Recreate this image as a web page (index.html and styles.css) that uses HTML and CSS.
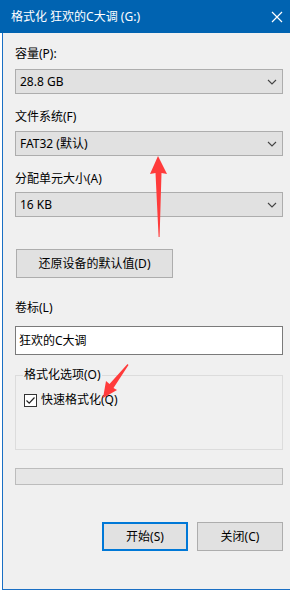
FILE: index.html
```html
<!DOCTYPE html>
<html lang="zh-CN">
<head>
    <meta charset="UTF-8">
    <meta name="viewport" content="width=device-width, initial-scale=1.0">
    <title>格式化 狂欢的C大调 (G:)</title>
    <link rel="stylesheet" href="styles.css">
</head>
<body>
    <div class="window">
        <div class="titlebar">
            <span class="title">格式化 狂欢的C大调 (G:)</span>
            <svg class="close-icon" width="12" height="12" viewBox="0 0 12 12">
                <path d="M1 1 L11 11 M11 1 L1 11" stroke="#fff" stroke-width="1.2" fill="none"/>
            </svg>
        </div>

        <div class="frame">
            <div class="dialog">
                <div class="label label-first">容量(P):</div>
                <div class="combo">
                    <span>28.8 GB</span>
                    <svg class="chevron" width="10" height="6" viewBox="0 0 10 6"><path d="M1 1 L5 5 L9 1" stroke="#444" stroke-width="1.1" fill="none"/></svg>
                </div>

                <div class="label">文件系统(F)</div>
                <div class="combo">
                    <span>FAT32 (默认)</span>
                    <svg class="chevron" width="10" height="6" viewBox="0 0 10 6"><path d="M1 1 L5 5 L9 1" stroke="#444" stroke-width="1.1" fill="none"/></svg>
                </div>

                <div class="label label-tight">分配单元大小(A)</div>
                <div class="combo">
                    <span>16 KB</span>
                    <svg class="chevron" width="10" height="6" viewBox="0 0 10 6"><path d="M1 1 L5 5 L9 1" stroke="#444" stroke-width="1.1" fill="none"/></svg>
                </div>

                <button class="btn btn-reset">还原设备的默认值(D)</button>

                <div class="label label-volume">卷标(L)</div>
                <div class="textbox">狂欢的C大调</div>

                <fieldset class="group">
                    <legend>格式化选项(O)</legend>
                    <label class="check">
                        <span class="checkbox">
                            <svg width="11" height="11" viewBox="0 0 11 11"><path d="M1.5 5.5 L4.2 8.2 L9.5 2.5" stroke="#222" stroke-width="1.2" fill="none"/></svg>
                        </span>
                        快速格式化(Q)
                    </label>
                </fieldset>

                <div class="progress"></div>

                <div class="actions">
                    <button class="btn btn-default">开始(S)</button>
                    <button class="btn">关闭(C)</button>
                </div>
            </div>
        </div>

        <svg class="arrows" width="290" height="591" viewBox="0 0 290 591">
            <polygon points="158,156 167,174 161.5,173 159.6,237 158.6,237 155.5,173 150,174" fill="#ff3b3b"/>
            <polygon points="103,398 106,381 109.5,384 127.5,364 128.5,365 113.5,388 117,390" fill="#ff3b3b"/>
        </svg>
    </div>
</body>
</html>
```

FILE: styles.css
```css
* {
    box-sizing: border-box;
}

body {
    margin: 0;
    background-color: #fff;
    font-family: "Noto Sans", "Noto Sans CJK SC", sans-serif;
    font-size: 12px;
    color: #000;
}

.window {
    position: relative;
    width: 290px;
    height: 591px;
    display: flex;
    flex-direction: column;
}

.titlebar {
    height: 33px;
    background-color: #0063b1;
    color: #fff;
    display: flex;
    align-items: center;
    justify-content: space-between;
    padding: 0 6px 0 11px;
}

.title {
    font-size: 12px;
    line-height: 16px;
}

.close-icon {
    margin-right: 1px;
}

.frame {
    height: 557px;
    padding-left: 2px;
}

.dialog {
    height: 100%;
    background-color: #f0f0f0;
    border-left: 1px solid #1a6fc4;
    border-bottom: 1px solid #1a6fc4;
    padding: 0 7px 0 12px;
    display: flex;
    flex-direction: column;
}

.label {
    line-height: 16px;
    margin: 15px 0 6px;
}

.label-first {
    margin-top: 13px;
    margin-bottom: 7px;
}

.label-tight {
    margin-bottom: 5px;
}

.label-volume {
    margin: 22px 0 10px;
}

.combo {
    height: 25px;
    background-color: #e1e1e1;
    border: 1px solid #adadad;
    display: flex;
    align-items: center;
    justify-content: space-between;
    padding: 0 5px 0 4px;
    line-height: 16px;
}

.chevron {
    display: block;
}

.btn {
    font-family: inherit;
    font-size: 12px;
    color: #000;
    background-color: #e1e1e1;
    border: 1px solid #adadad;
    height: 29px;
    width: 86px;
    padding: 0;
    line-height: 16px;
}

.btn-reset {
    width: 157px;
    margin: 32px 0 0 1px;
}

.btn-default {
    border: 2px solid #0078d7;
}

.textbox {
    height: 29px;
    background-color: #fff;
    border: 1px solid #7a7a7a;
    padding: 0 3px;
    display: flex;
    align-items: center;
    line-height: 16px;
}

.group {
    margin: 12px 0 0;
    height: 83px;
    border: 1px solid #dcdcdc;
    padding: 0 8px;
}

.group legend {
    padding: 0 1px;
    margin-left: -1px;
    line-height: 16px;
}

.check {
    display: flex;
    align-items: center;
    gap: 4px;
    margin-top: 9px;
    line-height: 16px;
}

.checkbox {
    width: 13px;
    height: 13px;
    border: 1px solid #333;
    background-color: #fff;
    display: flex;
    align-items: center;
    justify-content: center;
}

.checkbox svg {
    display: block;
}

.progress {
    height: 17px;
    margin-top: 18px;
    background-color: #e6e6e6;
    border: 1px solid #bcbcbc;
}

.actions {
    display: flex;
    justify-content: flex-end;
    gap: 9px;
    margin-top: 37px;
}

.arrows {
    position: absolute;
    left: 0;
    top: 0;
    pointer-events: none;
}
```
